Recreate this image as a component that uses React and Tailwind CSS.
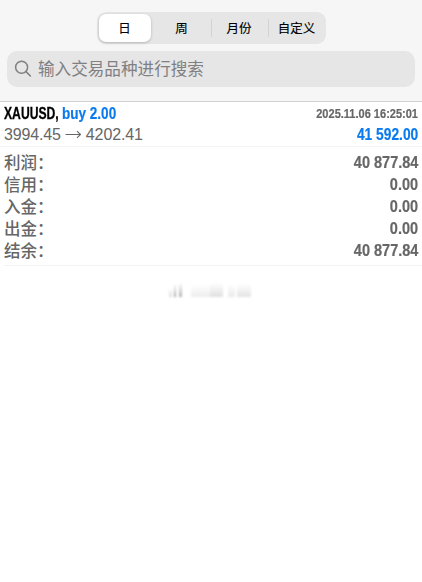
import React, { useState } from "react";

const periods = [
  { label: "日", width: "w-[56px]" },
  { label: "周", width: "w-[58px]" },
  { label: "月份", width: "w-[57px]" },
  { label: "自定义", width: "w-[58px]" },
];

const summary = [
  { label: "利润：", value: "40 877.84" },
  { label: "信用：", value: "0.00" },
  { label: "入金：", value: "0.00" },
  { label: "出金：", value: "0.00" },
  { label: "结余：", value: "40 877.84" },
];

const SearchIcon = () => (
  <svg
    className="h-[18px] w-[18px] shrink-0"
    viewBox="0 0 18 18"
    fill="none"
    stroke="#808083"
    strokeWidth="1.5"
    strokeLinecap="round"
  >
    <circle cx="7.6" cy="7.2" r="6" />
    <path d="M12 11.6l4.4 4.4" />
  </svg>
);

const App = () => {
  const [active, setActive] = useState(0);

  return (
    <div className="h-[582px] w-[422px] overflow-hidden bg-white font-['Liberation_Sans','Noto_Sans_CJK_SC',sans-serif] text-[#666666]">
      {/* Header */}
      <div className="flex h-[102px] flex-col border-b border-[#d2d2d3] bg-[#f6f6f6] pt-[12px]">
        <div className="mx-auto flex h-[32px] w-[229px] items-center rounded-[9px] bg-[#e6e6e6]">
          {periods.map((item, i) => (
            <button
              key={item.label}
              onClick={() => setActive(i)}
              className={`${item.width} relative flex h-full items-center justify-center p-[2px]`}
            >
              <span
                className={`flex h-[28px] w-full items-center justify-center rounded-[7px] pt-[2px] text-[12.5px] text-black [-webkit-text-stroke:0.15px_black] ${
                  active === i ? "bg-white shadow-[0_1px_3px_rgba(0,0,0,0.22)]" : ""
                }`}
              >
                {item.label}
              </span>
              {i > 1 && (
                <span className="absolute left-0 top-[7px] h-[18px] w-px bg-[#d3d3d4]"></span>
              )}
            </button>
          ))}
        </div>
        <div className="ml-[7px] mt-[7px] flex h-[36px] w-[408px] items-center gap-[6px] rounded-[10px] bg-[#e6e6e6] pl-[7px]">
          <SearchIcon />
          <span className="pt-[3px] text-[16.6px] leading-none text-[#808083]">
            输入交易品种进行搜索
          </span>
        </div>
      </div>

      {/* Deal */}
      <div className="h-[45px] border-b border-[#f3f3f3] pl-[4px] pr-[4px]">
        <div className="flex h-[23px] items-center justify-between font-bold">
          <div className="flex whitespace-nowrap text-[16px]">
            <span className="w-[58px]">
              <span className="inline-block origin-left scale-x-[0.76] text-black [-webkit-text-stroke:0.3px_black]">
                XAUUSD,
              </span>
            </span>
            <span className="w-[54px]">
              <span className="inline-block origin-left scale-x-[0.846] text-[#0a7aee] [-webkit-text-stroke:0.2px_#0a7aee]">
                buy 2.00
              </span>
            </span>
          </div>
          <span className="origin-right scale-x-[0.848] text-[13px] [-webkit-text-stroke:0.2px_#666666]">
            2025.11.06 16:25:01
          </span>
        </div>
        <div className="flex h-[20px] items-center justify-between">
          <div className="flex items-center text-[16px] tracking-[-0.14px]">
            <span>3994.45</span>
            <svg
              className="ml-[4px] mr-[4px] h-[10px] w-[17px]"
              viewBox="0 0 17 10"
              fill="none"
              stroke="#666666"
              strokeWidth="1.1"
            >
              <path d="M0.5 4.5h15M12 1.2L15.5 4.5l-3.5 3.3" />
            </svg>
            <span>4202.41</span>
          </div>
          <span className="origin-right scale-x-[0.86] text-[16px] font-bold text-[#0a7aee] [-webkit-text-stroke:0.2px_#0a7aee]">
            41 592.00
          </span>
        </div>
      </div>

      {/* Summary */}
      <div className="ml-[4px] h-[119px] border-b border-[#f3f3f3] pr-[4px] pt-[4px]">
        {summary.map((row) => (
          <div key={row.label} className="flex h-[22px] items-center justify-between">
            <span className="pt-[2px] text-[16.5px] font-medium leading-none">{row.label}</span>
            <span className="origin-right scale-x-[0.88] text-[16.5px] font-bold [-webkit-text-stroke:0.2px_#666666]">
              {row.value}
            </span>
          </div>
        ))}
      </div>

      {/* Faded strip under the totals */}
      <div className="ml-[169px] mt-[15px] flex h-[16px] items-end blur-[1px]">
        <span className="h-[9px] w-[3px] bg-linear-to-b from-white to-[#dcdcdc]"></span>
        <span className="ml-[2px] h-[13px] w-[2px] bg-linear-to-b from-white to-[#a5a5a5]"></span>
        <span className="ml-[3px] h-[14px] w-[3px] bg-linear-to-b from-white to-[#b0b0b0]"></span>
        <span className="ml-[9px] h-[12px] w-[19px] bg-linear-to-b from-white to-[#ededed]"></span>
        <span className="h-[14px] w-[13px] bg-linear-to-b from-white to-[#e0e0e0]"></span>
        <span className="ml-[5px] h-[13px] w-[7px] bg-linear-to-b from-white to-[#eaeaea]"></span>
        <span className="ml-[2px] h-[13px] w-[14px] bg-linear-to-b from-white to-[#e3e3e3]"></span>
      </div>
    </div>
  );
};

export default App;
